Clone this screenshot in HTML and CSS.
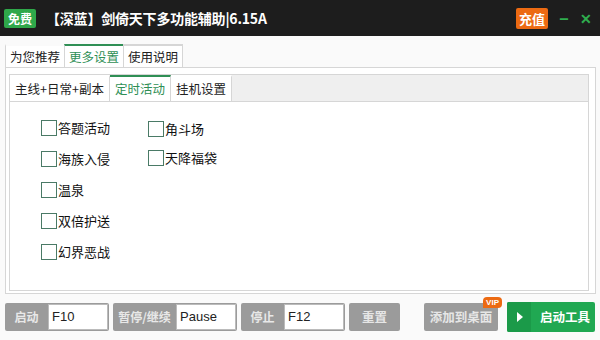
FILE: index.html
```html
<!DOCTYPE html>
<html lang="zh">
<head>
    <meta charset="UTF-8">
    <title>剑倚天下多功能辅助</title>
    <link rel="stylesheet" href="styles.css">
</head>
<body>
    <div class="titlebar">
        <span class="badge-free">免费</span>
        <span class="title">【深蓝】剑倚天下多功能辅助|6.15A</span>
        <span class="badge-pay">充值</span>
        <span class="win-btn">&minus;</span>
        <span class="win-btn close">&#x2715;</span>
    </div>

    <div class="main">
        <div class="tabs outer-tabs">
            <div class="tab">为您推荐</div>
            <div class="tab active">更多设置</div>
            <div class="tab">使用说明</div>
        </div>
        <div class="outer-panel">
            <div class="inner-panel">
                <div class="tabs inner-tabs">
                    <div class="tab">主线+日常+副本</div>
                    <div class="tab active">定时活动</div>
                    <div class="tab">挂机设置</div>
                </div>
                <div class="content">
                    <div class="col">
                        <label class="check"><span class="box"></span>答题活动</label>
                        <label class="check"><span class="box"></span>海族入侵</label>
                        <label class="check"><span class="box"></span>温泉</label>
                        <label class="check"><span class="box"></span>双倍护送</label>
                        <label class="check"><span class="box"></span>幻界恶战</label>
                    </div>
                    <div class="col col2">
                        <label class="check"><span class="box"></span>角斗场</label>
                        <label class="check"><span class="box"></span>天降福袋</label>
                    </div>
                </div>
            </div>
        </div>
    </div>

    <div class="bottombar">
        <div class="hotkey"><span class="hk-label">启动</span><span class="hk-input">F10</span></div>
        <div class="hotkey"><span class="hk-label wide">暂停/继续</span><span class="hk-input">Pause</span></div>
        <div class="hotkey"><span class="hk-label">停止</span><span class="hk-input">F12</span></div>
        <div class="btn-gray reset">重置</div>
        <div class="btn-gray desk">添加到桌面<span class="vip">VIP</span></div>
        <div class="btn-start"><span class="play"></span><span class="start-text">启动工具</span></div>
    </div>
</body>
</html>
```

FILE: styles.css
```css
body {
    margin: 0;
    width: 600px;
    height: 340px;
    overflow: hidden;
    background: #fafafa;
    font-family: "Microsoft YaHei", "Noto Sans CJK SC", "Liberation Sans", sans-serif;
    font-size: 12px;
    color: #222;
}

.titlebar {
    height: 36px;
    background: #1d1d1d;
    display: flex;
    align-items: center;
    padding: 0 4px;
    color: #fff;
}

.badge-free {
    background: #2fa84a;
    color: #fff;
    font-size: 12px;
    font-weight: bold;
    padding: 0 4px;
    height: 19px;
    line-height: 19px;
    border-radius: 2px;
}

.title {
    margin-left: 10px;
    font-size: 14px;
    font-weight: bold;
    flex: 1;
    letter-spacing: -0.2px;
}

.badge-pay {
    background: #ec6a12;
    color: #fff;
    font-size: 13px;
    font-weight: bold;
    height: 21px;
    line-height: 21px;
    padding: 0 3px;
    border-radius: 2px;
}

.win-btn {
    color: #2fae4e;
    font-weight: bold;
    font-size: 16px;
    margin-left: 10px;
    width: 12px;
    text-align: center;
}

.win-btn.close {
    font-size: 14px;
    margin-left: 10px;
    margin-right: 4px;
}

.main {
    padding: 8px 4px 0 5px;
}

.tabs {
    display: flex;
}

.tab {
    height: 20px;
    line-height: 20px;
    padding: 0 4px;
    background: #fff;
    border: 1px solid #d6d6d6;
    border-top: 2px solid #d6d6d6;
    border-bottom: none;
    margin-right: -1px;
    white-space: nowrap;
}

.tab.active {
    color: #2f8f55;
    border-top-color: #2f8f55;
}

.outer-tabs .tab:first-child {
    border-top-color: #fafafa;
    border-left-color: #d6d6d6;
}

.outer-tabs .tab {
    height: 21px;
    line-height: 21px;
    font-size: 12.5px;
}

.outer-panel {
    border: 1px solid #d6d6d6;
    background: #fff;
    padding: 6px 6px 2px 3px;
}

.inner-panel {
    border: 1px solid #d6d6d6;
    background: #fff;
}

.inner-tabs {
    background: #efefef;
    border-bottom: 1px solid #d6d6d6;
    height: 26px;
}

.inner-tabs .tab {
    height: 24px;
    line-height: 24px;
    padding: 0 5px;
    font-size: 12.5px;
    border-top: 2px solid #fff;
    border-left: none;
    border-right: 1px solid #d6d6d6;
    margin-right: 0;
}

.inner-tabs .tab.active {
    border-top-color: #2f8f55;
}

.content {
    height: 178px;
    display: flex;
    padding: 10px 0 0 31px;
}

.col {
    display: flex;
    flex-direction: column;
}

.col2 {
    margin-left: 38px;
    padding-top: 2px;
}

.check {
    display: flex;
    align-items: center;
    height: 31px;
    font-size: 13px;
    color: #111;
}

.col2 .check {
    height: 29px;
}

.box {
    width: 14px;
    height: 14px;
    border: 1px solid #4a7a66;
    background: #fff;
    margin-right: 1px;
}

.bottombar {
    display: flex;
    align-items: center;
    padding: 8px 0 0 5px;
}

.hotkey {
    display: flex;
    flex-shrink: 0;
    height: 28px;
    background: #9b9b9b;
    border-radius: 2px;
    margin-right: 4px;
}

.hk-label {
    width: 43px;
    text-align: center;
    color: #e8e8e8;
    font-weight: bold;
    line-height: 28px;
    font-size: 12px;
    white-space: nowrap;
}

.hk-label.wide {
    width: 63px;
}

.hk-input {
    box-sizing: border-box;
    background: #fff;
    width: 60px;
    height: 26px;
    margin: 1px 1px 1px 0;
    border: 1px solid #bbb;
    line-height: 24px;
    padding-left: 3px;
    font-family: "Liberation Sans", "Noto Sans CJK SC", sans-serif;
    font-size: 13px;
    color: #222;
}

.btn-gray {
    flex-shrink: 0;
    height: 28px;
    line-height: 28px;
    background: #9b9b9b;
    color: #e6e6e6;
    font-weight: bold;
    border-radius: 2px;
    text-align: center;
    font-size: 12.5px;
    white-space: nowrap;
}

.reset {
    width: 51px;
}

.desk {
    width: 74px;
    margin-left: 24px;
    position: relative;
}

.vip {
    position: absolute;
    top: -6px;
    right: -4px;
    background: #ec6a12;
    color: #fff;
    font-size: 8px;
    line-height: 11px;
    height: 11px;
    padding: 0 3px;
    border-radius: 4px 4px 4px 0;
    font-family: "Liberation Sans", sans-serif;
}

.btn-start {
    display: flex;
    flex-shrink: 0;
    height: 30px;
    width: 88px;
    margin-left: 9px;
    background: #20a852;
    border-radius: 2px;
    color: #fff;
    font-weight: bold;
    font-size: 12.5px;
    overflow: hidden;
    white-space: nowrap;
}

.play {
    width: 24px;
    background: #1b9a49;
    position: relative;
}

.play::after {
    content: "";
    position: absolute;
    left: 10px;
    top: 10px;
    border-left: 6px solid #fff;
    border-top: 5px solid transparent;
    border-bottom: 5px solid transparent;
}

.start-text {
    flex: 1;
    text-align: center;
    line-height: 30px;
    padding-left: 4px;
}
```
